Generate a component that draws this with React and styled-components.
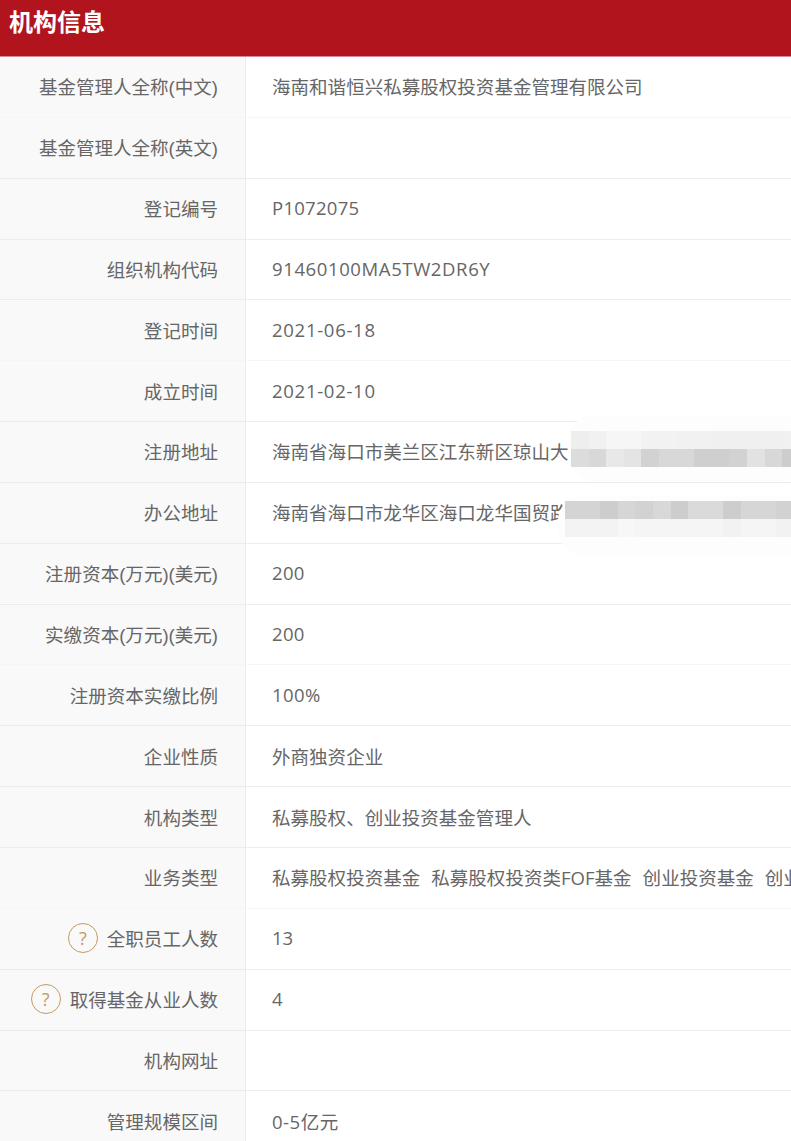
import React from "react";
import styled, { createGlobalStyle } from "styled-components";

const Global = createGlobalStyle`
  html, body { margin: 0; padding: 0; background: #fff; }
  body { overflow: hidden; height: 1141px; width: 791px; }
  * { box-sizing: border-box; }
`;
const Page = styled.div`
  position: relative; width: 791px; height: 1141px; overflow: hidden;
  font-family: "Open Sans", "Noto Sans CJK SC", sans-serif; color: #666;
`;
const Header = styled.header`
  height: 57px; background: #b2141e; border-bottom: 1px solid #d98a8e;
  padding: 6px 0 0 9px; color: #fff; font-size: 24px; font-weight: 700; line-height: 32px;
`;
const Row = styled.div`
  display: grid; grid-template-columns: 246px 1fr; height: 60.85px;
  border-bottom: 1px solid ${p => (p.$faint ? "#f6f6f6" : "#ececec")};
`;
const Label = styled.div`
  display: flex; align-items: center; justify-content: flex-end; gap: 9px;
  padding: 0 27px 2px 0; background: #f9f9f9; border-right: 1px solid #ececec;
  font-family: "Liberation Sans", "Noto Sans CJK SC", sans-serif;
  font-size: 18.55px; white-space: nowrap;
`;
const Value = styled.div`
  display: flex; align-items: center; padding: 0 0 2px 26px;
  font-size: 18.55px; white-space: nowrap; overflow: hidden;
  letter-spacing: ${p => p.$track || 0}px;
`;
const Tag = styled.span`
  margin-right: 11px; flex: none;
`;
const Help = styled.span`
  width: 30px; height: 30px; border-radius: 50%; border: 1px solid #c49a63; color: #c49a63;
  display: inline-flex; align-items: center; justify-content: center; font-size: 18px; flex: none;
  font-family: "Open Sans", sans-serif;
`;
const Mask = styled.div`
  position: absolute; border-radius: 26px; background: #fdfdfd;
  display: grid; grid-auto-rows: 18px; align-content: start;
`;
const Strip = styled.div`
  display: flex; height: 18px;
`;
const Cell = styled.span`
  width: 17.6px; flex: none;
`;

const rows = [
  ["基金管理人全称(中文)", "海南和谐恒兴私募股权投资基金管理有限公司", 0, 1, 0],
  ["基金管理人全称(英文)", "", 0, 0, 0],
  ["登记编号", "P1072075", 0, 0, 0.25],
  ["组织机构代码", "91460100MA5TW2DR6Y", 0, 0, 0.6],
  ["登记时间", "2021-06-18", 0, 1, 0.7],
  ["成立时间", "2021-02-10", 0, 0, 0.7],
  ["注册地址", "海南省海口市美兰区江东新区琼山大道", 0, 0, 0],
  ["办公地址", "海南省海口市龙华区海口龙华国贸路", 0, 0, 0],
  ["注册资本(万元)(美元)", "200", 0, 0, 0.3],
  ["实缴资本(万元)(美元)", "200", 0, 1, 0.3],
  ["注册资本实缴比例", "100%", 0, 0, 0.4],
  ["企业性质", "外商独资企业", 0, 0, 0],
  ["机构类型", "私募股权、创业投资基金管理人", 0, 0, 0],
  ["业务类型", null, 0, 1, 0],
  ["全职员工人数", "13", 1, 0, 0],
  ["取得基金从业人数", "4", 1, 0, 0],
  ["机构网址", "", 0, 0, 0],
  ["管理规模区间", "0-5亿元", 0, 0, 0.5],
];
const tags = ["私募股权投资基金", "私募股权投资类FOF基金", "创业投资基金", "创业投资类FOF基金"];

const g = v => `rgb(${v},${v},${v})`;
const blur1 = [
  [238,241,246,246,242,242,241,241,240,240,240,240,241,241,241,241,241,241,241,241,241,241,241],
  [220,216,232,228,210,216,216,207,207,210,226,216,205,210,210,205,216,216,210,216,210,216,210],
];
const blur2 = [
  [212,212,205,214,210,216,205,218,218,205,214,214,210,210,240,240,240,240,240,240,240,240,240,240],
  [243,243,243,247,245,245,245,245,245,242,245,245,242,242,248,248,248,248,248,248,248,248,248,248],
];

const Blur = ({ data, style }) => (
  <Mask style={style}>
    {data.map((line, i) => (
      <Strip key={i}>{line.map((v, j) => <Cell key={j} style={{ background: g(v) }} />)}</Strip>
    ))}
  </Mask>
);

export default function App() {
  return (
    <Page>
      <Global />
      <Header>机构信息</Header>
      {rows.map(([l, v, help, faint, track]) => (
        <Row key={l} $faint={faint}>
          <Label>{help ? <Help>?</Help> : null}{l}</Label>
          <Value $track={track}>{v === null ? tags.map(t => <Tag key={t}>{t}</Tag>) : v}</Value>
        </Row>
      ))}
      <Blur data={blur1} style={{ left: 568, top: 415, width: 240, height: 66, paddingTop: 16, paddingLeft: 3 }} />
      <Blur data={blur2} style={{ left: 558, top: 495, width: 250, height: 60, paddingTop: 6, paddingLeft: 7 }} />
    </Page>
  );
}
